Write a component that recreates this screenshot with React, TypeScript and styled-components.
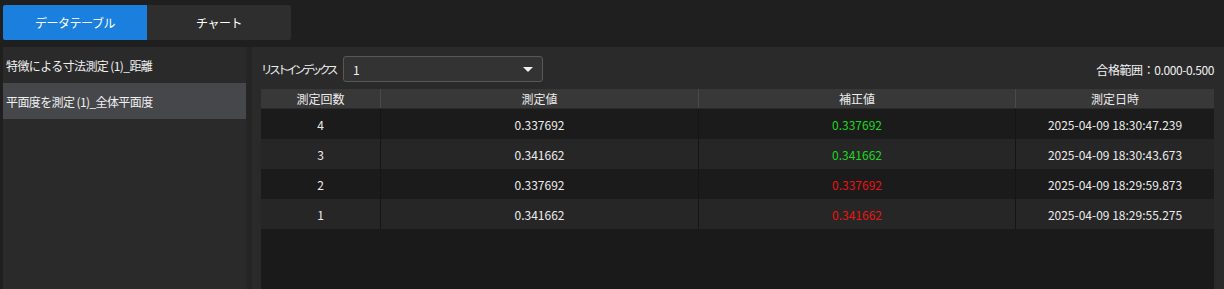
import styled, { createGlobalStyle } from "styled-components";

const GlobalStyle = createGlobalStyle`
  html, body {
    margin: 0;
    padding: 0;
    background: #1f1f1f;
    font-family: "Noto Sans CJK JP", "Noto Sans", sans-serif;
    font-size: 12px;
    color: #e6e6e6;
  }
`;

const Wrapper = styled.div`
  width: 1224px;
  height: 289px;
  background: #1f1f1f;
  display: flex;
  flex-direction: column;
  padding-left: 3px;
  box-sizing: border-box;
  overflow: hidden;
`;
const TabBar = styled.div`
  display: flex;
  padding-top: 5px;
  height: 35px;
  margin-bottom: 7px;
`;
const Tab = styled.button<{ $active?: boolean }>`
  width: 144px;
  height: 35px;
  border: none;
  border-radius: ${(p) => (p.$active ? "2px 0 0 2px" : "0 2px 2px 0")};
  background: ${(p) => (p.$active ? "#1a7fdd" : "#2e2e2e")};
  color: #fff;
  font-family: inherit;
  font-size: 12px;
  letter-spacing: -0.5px;
  cursor: pointer;
`;
const Body = styled.div`
  flex: 1;
  display: flex;
  min-height: 0;
`;
const Sidebar = styled.div`
  width: 243px;
  background: #2a2a2a;
  display: flex;
  flex-direction: column;
`;
const SideItem = styled.div<{ $selected?: boolean }>`
  height: 36px;
  display: flex;
  align-items: center;
  padding-left: 3px;
  letter-spacing: -0.6px;
  background: ${(p) => (p.$selected ? "#46474b" : "transparent")};
  color: #f0f0f0;
`;
const Splitter = styled.div`
  width: 6px;
  background: #252525;
`;
const Main = styled.div`
  flex: 1;
  background: #2a2a2a;
  display: flex;
  flex-direction: column;
  padding: 9px 0 0 9px;
`;
const MainInner = styled.div`
  flex: 1;
  display: flex;
  flex-direction: column;
  margin-right: 10px;
  min-height: 0;
`;
const Toolbar = styled.div`
  height: 26px;
  display: flex;
  align-items: center;
  margin-bottom: 7px;
`;
const Label = styled.span`
  width: 77px;
  margin-right: 5px;
  white-space: nowrap;
  font-size: 11.5px;
  letter-spacing: -3.2px;
  color: #f0f0f0;
`;
const Select = styled.div`
  width: 200px;
  height: 26px;
  box-sizing: border-box;
  border: 1px solid #585858;
  border-radius: 3px;
  background: #333333;
  display: flex;
  align-items: center;
  justify-content: space-between;
  padding: 0 9px 0 9px;
  color: #f0f0f0;
`;
const Caret = styled.span`
  width: 0;
  height: 0;
  border-left: 5px solid transparent;
  border-right: 5px solid transparent;
  border-top: 5px solid #f0f0f0;
`;
const Range = styled.span`
  margin-left: auto;
  letter-spacing: -0.4px;
  color: #f0f0f0;
`;
const Table = styled.div`
  flex: 1;
  background: #1a1a1a;
  display: flex;
  flex-direction: column;
`;
const Row = styled.div<{ $kind: "head" | "odd" | "even" }>`
  display: grid;
  grid-template-columns: 119px 318px 317px 1fr;
  height: ${(p) => (p.$kind === "head" ? "19px" : "30px")};
  background: ${(p) =>
    p.$kind === "head" ? "#383838" : p.$kind === "odd" ? "#1b1b1b" : "#262626"};
  border-bottom: ${(p) => (p.$kind === "head" ? "1px solid #2a2a2a" : "none")};
`;
const Cell = styled.div<{ $color?: string; $head?: boolean }>`
  display: flex;
  align-items: center;
  justify-content: center;
  color: ${(p) => p.$color || "#ececec"};
  border-left: 1px solid ${(p) => (p.$head ? "#4a4a4a" : "#151515")};
  &:first-child {
    border-left: none;
  }
`;

const GREEN = "#1ed81e";
const RED = "#ec1414";

const rows = [
  { n: "4", v: "0.337692", c: "0.337692", col: GREEN, t: "2025-04-09 18:30:47.239" },
  { n: "3", v: "0.341662", c: "0.341662", col: GREEN, t: "2025-04-09 18:30:43.673" },
  { n: "2", v: "0.337692", c: "0.337692", col: RED, t: "2025-04-09 18:29:59.873" },
  { n: "1", v: "0.341662", c: "0.341662", col: RED, t: "2025-04-09 18:29:55.275" },
];

export default function App() {
  return (
    <Wrapper>
      <GlobalStyle />
      <TabBar>
        <Tab $active>データテーブル</Tab>
        <Tab>チャート</Tab>
      </TabBar>
      <Body>
        <Sidebar>
          <SideItem>特徴による寸法測定 (1)_距離</SideItem>
          <SideItem $selected>平面度を測定 (1)_全体平面度</SideItem>
        </Sidebar>
        <Splitter />
        <Main>
          <MainInner>
            <Toolbar>
              <Label>リストインデックス</Label>
              <Select>
                <span>1</span>
                <Caret />
              </Select>
              <Range>合格範囲：0.000-0.500</Range>
            </Toolbar>
            <Table>
              <Row $kind="head">
                <Cell $head>測定回数</Cell>
                <Cell $head>測定値</Cell>
                <Cell $head>補正値</Cell>
                <Cell $head>測定日時</Cell>
              </Row>
              {rows.map((r, i) => (
                <Row key={r.n} $kind={i % 2 === 0 ? "odd" : "even"}>
                  <Cell>{r.n}</Cell>
                  <Cell>{r.v}</Cell>
                  <Cell $color={r.col}>{r.c}</Cell>
                  <Cell>{r.t}</Cell>
                </Row>
              ))}
            </Table>
          </MainInner>
        </Main>
      </Body>
    </Wrapper>
  );
}
